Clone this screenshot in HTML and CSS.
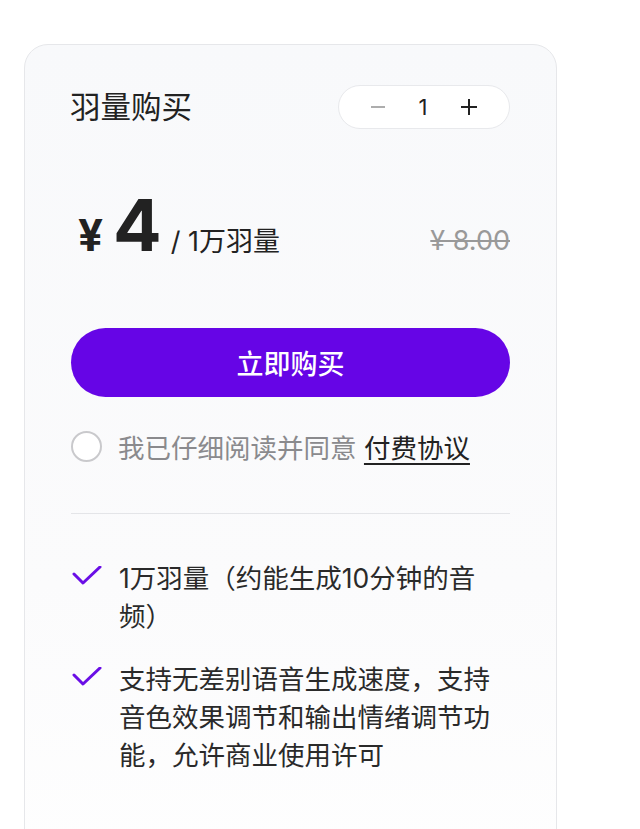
FILE: index.html
```html
<!DOCTYPE html>
<html lang="zh-CN">
<head>
<meta charset="utf-8">
<link rel="stylesheet" href="styles.css">
</head>
<body>
<div class="card">
  <div class="header">
    <div class="title">羽量购买</div>
    <div class="stepper">
      <svg class="minus" viewBox="0 0 14 14" width="14" height="14"><path d="M0 7 H14" stroke="#999" stroke-width="1.6"/></svg>
      <span class="qty">1</span>
      <svg class="plus" viewBox="0 0 16 16" width="16" height="16"><path d="M0 8 H16 M8 0 V16" stroke="#222" stroke-width="2"/></svg>
    </div>
  </div>
  <div class="price-row">
    <div class="price">
      <span class="yen">¥</span><span class="amount">4</span><span class="unit">/ 1万羽量</span>
    </div>
    <div class="old-price">¥ 8.00</div>
  </div>
  <button class="buy">立即购买</button>
  <div class="agree">
    <span class="radio"></span>
    <span class="agree-text">我已仔细阅读并同意 <a class="link">付费协议</a></span>
  </div>
  <div class="divider"></div>
  <ul class="features">
    <li>
      <svg class="check" viewBox="0 0 30 20" width="30" height="20"><path d="M2 8 L11 17 L28 1" fill="none" stroke="#6a0ee6" stroke-width="3" stroke-linecap="round" stroke-linejoin="round"/></svg>
      <span>1万羽量（约能生成10分钟的音频）</span>
    </li>
    <li>
      <svg class="check" viewBox="0 0 30 20" width="30" height="20"><path d="M2 8 L11 17 L28 1" fill="none" stroke="#6a0ee6" stroke-width="3" stroke-linecap="round" stroke-linejoin="round"/></svg>
      <span>支持无差别语音生成速度，支持音色效果调节和输出情绪调节功能，允许商业使用许可</span>
    </li>
  </ul>
</div>
</body>
</html>
```
FILE: styles.css
```css
* { box-sizing: border-box; }
html, body { margin: 0; padding: 0; background: #fff; }
body {
  font-family: "Inter", "Noto Sans CJK SC", sans-serif;
  color: #222;
  overflow: hidden;
  height: 829px;
}
.card {
  margin: 44px 0 0 24px;
  width: 533px;
  height: 900px;
  border: 1px solid #e6e7ea;
  border-radius: 24px;
  background: linear-gradient(180deg, #f8f9fb 0%, #fbfbfc 60%, #ffffff 100%);
  padding: 40px 46px 0 46px;
}
.header {
  display: flex;
  justify-content: space-between;
  align-items: center;
}
.title {
  font-size: 30.5px;
  line-height: 44px;
  color: #222;
  margin-left: -1px;
}
.stepper {
  width: 172px;
  height: 44px;
  border: 1px solid #e8e9ec;
  border-radius: 22px;
  background: #fff;
  display: flex;
  align-items: center;
  justify-content: space-between;
  padding: 0 32px 0 32px;
  color: #222;
}
.qty { font-size: 22px; line-height: 1; }
.price-row {
  display: flex;
  justify-content: space-between;
  align-items: baseline;
  margin-top: 66px;
  height: 68px;
}
.price { display: flex; align-items: baseline; }
.yen {
  font-size: 44px;
  font-weight: 700;
  margin-left: 7px;
  margin-right: 10px;
}
.amount {
  font-size: 72px;
  font-weight: 700;
  line-height: 60px;
  margin-right: 9px;
}
.unit { font-size: 27px; }
.old-price {
  font-size: 27px;
  color: #999;
  text-decoration: line-through;
  position: relative;
  top: -1px;
}
.buy {
  display: block;
  margin-top: 65px;
  width: 100%;
  height: 69px;
  border: none;
  border-radius: 35px;
  background: #6605e6;
  color: #fff;
  font-family: inherit;
  font-size: 27px;
  font-weight: 500;
}
.agree {
  display: flex;
  align-items: center;
  margin-top: 30px;
  gap: 16px;
}
.radio {
  width: 31px;
  height: 31px;
  border: 2px solid #c9c9cc;
  border-radius: 50%;
  background: #fff;
  flex: none;
}
.agree-text { font-size: 26.5px; color: #8a8a8d; }
.link { color: #222; text-decoration: underline; text-underline-offset: 5px; text-decoration-thickness: 1.5px; }
.divider {
  height: 1px;
  background: #e4e5e8;
  margin-top: 47px;
}
.features {
  list-style: none;
  margin: 45px 0 0 0;
  padding: 0;
  display: flex;
  flex-direction: column;
  gap: 25px;
}
.features li {
  display: flex;
  align-items: flex-start;
  gap: 17px;
  font-size: 26.5px;
  line-height: 38px;
  color: #2a2a2a;
  padding-right: 14px;
}
.check { flex: none; margin-top: 7px; margin-left: 1px; }
```
